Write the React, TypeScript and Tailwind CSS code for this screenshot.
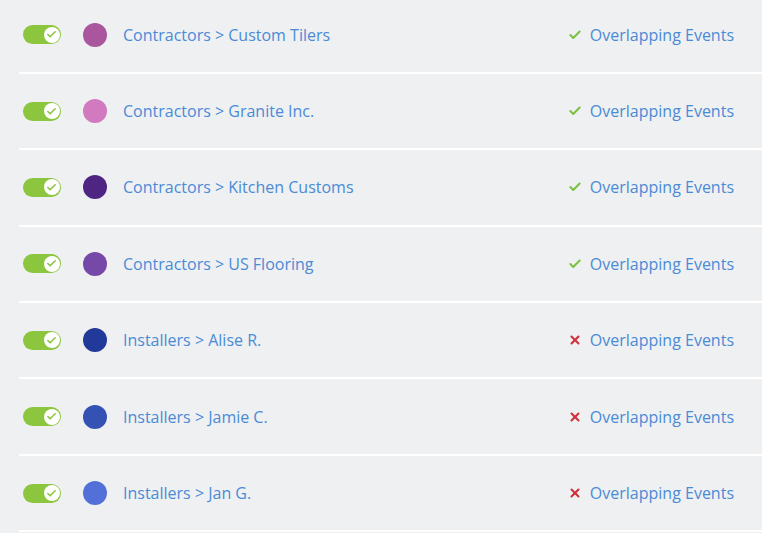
import { Check, X } from "lucide-react";

type Row = {
  label: string;
  color: string;
  ok: boolean;
};

const rows: Row[] = [
  { label: "Contractors > Custom Tilers", color: "#a9569f", ok: true },
  { label: "Contractors > Granite Inc.", color: "#d17ac0", ok: true },
  { label: "Contractors > Kitchen Customs", color: "#4e2583", ok: true },
  { label: "Contractors > US Flooring", color: "#7649a9", ok: true },
  { label: "Installers > Alise R.", color: "#213999", ok: false },
  { label: "Installers > Jamie C.", color: "#3451b4", ok: false },
  { label: "Installers > Jan G.", color: "#5270d7", ok: false },
];

function Toggle() {
  return (
    <div className="flex h-[19px] w-[38px] items-center justify-end rounded-full bg-[#8cc63f] pr-[1.5px]">
      <div className="flex h-[16px] w-[16px] items-center justify-center rounded-full bg-white">
        <Check className="h-[11px] w-[11px] text-[#8cc63f]" strokeWidth={3.5} />
      </div>
    </div>
  );
}

export default function App() {
  return (
    <div
      className="h-[533px] w-[762px] overflow-hidden bg-[#eff0f2]"
      style={{ fontFamily: '"Open Sans", "Liberation Sans", sans-serif' }}
    >
      <div className="-mt-[2.5px] pl-[19px]">
        {rows.map((r) => (
          <div
            key={r.label}
            className="flex h-[76.4px] items-center border-b-2 border-white pl-[4px] pr-[28px]"
          >
            <Toggle />
            <div
              className="ml-[22px] h-[24px] w-[24px] shrink-0 rounded-full"
              style={{ backgroundColor: r.color }}
            />
            <div className="ml-[16px] flex-1 text-[16px] text-[#4a8bd6]">{r.label}</div>
            <div className="flex items-center gap-[8px] text-[16px] text-[#4a8bd6]">
              {r.ok ? (
                <Check className="h-[14px] w-[14px] text-[#7cc142]" strokeWidth={3.5} />
              ) : (
                <X className="h-[14px] w-[14px] text-[#d1303b]" strokeWidth={3.5} />
              )}
              <span>Overlapping Events</span>
            </div>
          </div>
        ))}
      </div>
    </div>
  );
}
